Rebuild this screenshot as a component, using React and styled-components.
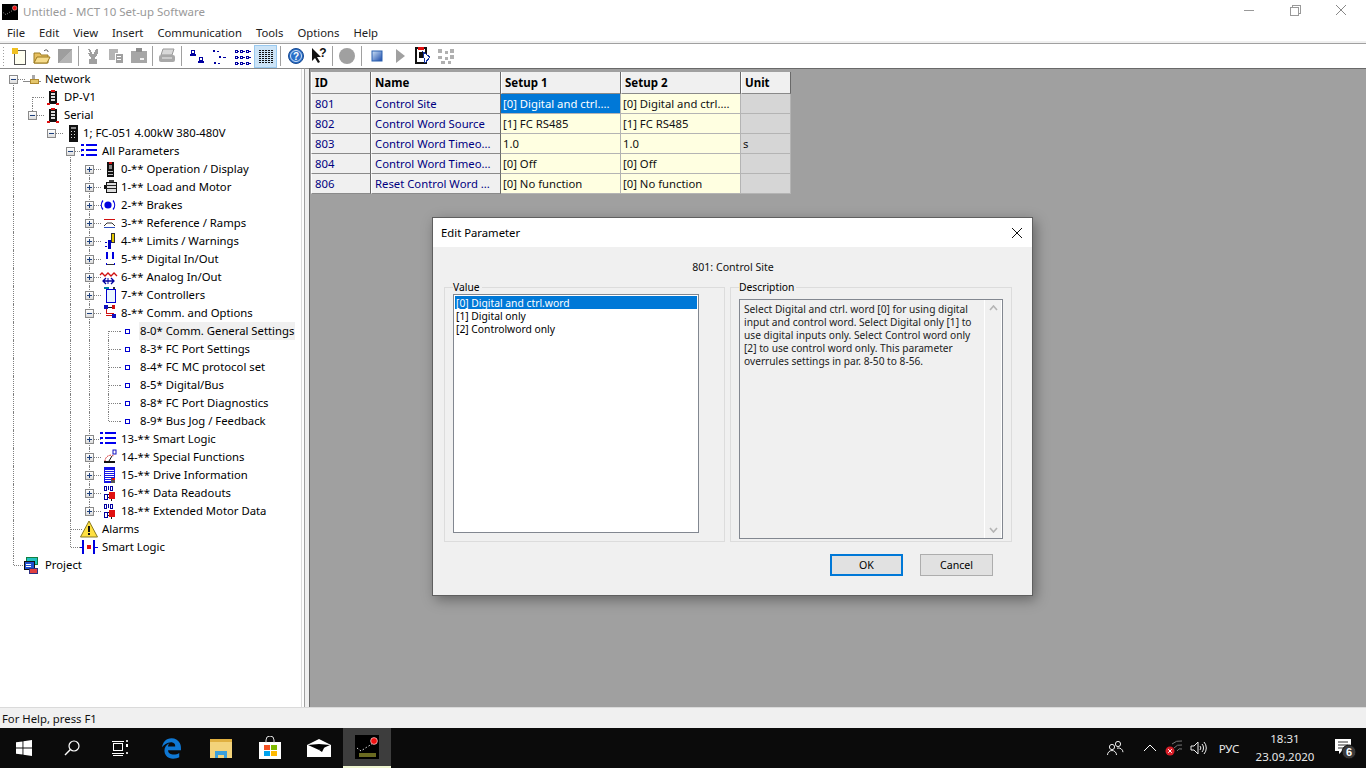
import React from 'react';
import styled, { createGlobalStyle } from 'styled-components';
import { FaEdgeLegacy } from 'react-icons/fa';

const GlobalStyle = createGlobalStyle`
  html, body { margin: 0; padding: 0; background: #fff; }
  * { box-sizing: border-box; }
  body { font-family: "Noto Sans", "Liberation Sans", sans-serif; font-size: 11.3px; color: #000; }
`;

const Screen = styled.div`
  position: relative;
  width: 1366px;
  height: 768px;
  overflow: hidden;
  display: flex;
  flex-direction: column;
`;

/* title bar + menu */
const TitleBar = styled.div`
  height: 24px;
  display: flex;
  align-items: center;
  padding-left: 2px;
  color: #999;
`;
const TitleText = styled.span`
  margin-left: 5px;
  margin-top: -2px;
  font-size: 11.5px;
`;
const WinControls = styled.div`
  margin-left: auto;
  display: flex;
  height: 20px;
  margin-top: -4px;
  margin-right: 2px;
`;
const WinControl = styled.div`
  width: 46px;
  display: flex;
  align-items: center;
  justify-content: center;
`;
const MenuBar = styled.div`
  height: 17px;
  display: flex;
  gap: 14px;
  padding-left: 7px;
  align-items: center;
  color: #222;
`;

/* toolbar */
const Toolbar = styled.div`
  height: 27px;
  border-top: 2px solid #f0f0f0;
  display: flex;
  align-items: center;
  padding-left: 7px;
  position: relative;
  box-shadow: inset 0 1px 0 #a0a0a0;
`;
const Grip = styled.div`
  position: absolute;
  left: 3px;
  top: 4px;
  bottom: 2px;
  width: 1px;
  background: repeating-linear-gradient(#a0a0a0 0 1px, transparent 1px 3px);
`;
const ToolButton = styled.div`
  width: 23px;
  height: 23px;
  margin-top: 1px;
  display: flex;
  align-items: center;
  justify-content: center;
  background: ${p => (p.$active ? '#cce4f7' : 'transparent')};
  border: 1px solid ${p => (p.$active ? '#99c9ef' : 'transparent')};
`;
const ToolSep = styled.div`
  width: ${p => p.$w}px;
  height: 20px;
  display: flex;
  justify-content: center;
  &::before { content: ''; width: 1px; background: #a0a0a0; }
`;

/* main area */
const Workspace = styled.div`
  height: 639px;
  display: flex;
`;
const TreePanel = styled.div`
  width: 305px;
  padding-top: 1px;
  background: #fff;
  border-top: 1px solid #8a8a8a;
  border-right: 1px solid #a0a0a0;
  box-shadow: inset -2px 0 0 #fff, inset -3px 0 0 #dcdcdc;
`;
const Splitter = styled.div`
  width: 4px;
  background: #f0f0f0;
  border-top: 1px solid #8a8a8a;
`;
const Mdi = styled.div`
  flex: 1;
  background: #a0a0a0;
  border-top: 1px solid #696969;
  border-left: 1px solid #696969;
  padding: 3px 0 0 1px;
`;

/* tree */
const TreeRow = styled.div`
  height: 18px;
  display: flex;
  padding-left: 4px;
  align-items: stretch;
`;
const Guide = styled.span`
  width: 19px;
  flex: none;
  position: relative;
  &::before {
    content: '';
    display: ${p => (p.$on ? 'block' : 'none')};
    position: absolute;
    left: 9px;
    top: 0;
    bottom: 0;
    border-left: 1px dotted #808080;
  }
`;
const Branch = styled.span`
  width: 19px;
  flex: none;
  position: relative;
  display: flex;
  align-items: center;
  justify-content: center;
  &::before {
    content: '';
    position: absolute;
    left: 9px;
    top: ${p => (p.$first ? '9px' : '0')};
    bottom: ${p => (p.$last ? '9px' : '0')};
    border-left: 1px dotted #808080;
  }
  &::after {
    content: '';
    position: absolute;
    left: 10px;
    right: -2px;
    top: 9px;
    border-top: 1px dotted #808080;
  }
`;
const Expander = styled.span`
  position: relative;
  z-index: 1;
  width: 9px;
  height: 9px;
  background: linear-gradient(#fff, #dcdcdc);
  border: 1px solid #8a8a8a;
  display: block;
  &::before {
    content: '';
    position: absolute;
    left: 1px;
    top: 3px;
    width: 5px;
    height: 1px;
    background: #1c3f7c;
  }
  &::after {
    content: '';
    display: ${p => (p.$open ? 'none' : 'block')};
    position: absolute;
    left: 3px;
    top: 1px;
    width: 1px;
    height: 5px;
    background: #1c3f7c;
  }
`;
const TreeIcon = styled.span`
  width: 21px;
  flex: none;
  display: flex;
  align-items: center;
  position: relative;
  z-index: 1;
`;
const TreeLabel = styled.span`
  height: 18px;
  line-height: 17px;
  padding: 0 1px;
  white-space: nowrap;
  background: ${p => (p.$selected ? '#f0f0f0' : 'transparent')};
  width: ${p => (p.$selected ? '156px' : 'auto')};
`;

/* parameter grid */
const ParamGrid = styled.div`
  display: grid;
  grid-template-columns: 60px 130px 120px 120px 50px;
  grid-template-rows: 22px repeat(5, 20px);
  width: 480px;
`;
const HeadCell = styled.div`
  background: #f0f0f0;
  font-weight: 700;
  padding-left: 3px;
  line-height: 21px;
  font-size: 11.5px;
  border-right: 1px solid #696969;
  border-bottom: 1px solid #8a8a8a;
  border-left: 1px solid #fff;
`;
const NameCell = styled.div`
  background: #f0f0f0;
  color: #000080;
  padding-left: 3px;
  line-height: 19px;
  white-space: nowrap;
  overflow: hidden;
  border-right: 1px solid #696969;
  border-bottom: 1px solid #8a8a8a;
  border-left: 1px solid #fff;
`;
const ValueCell = styled.div`
  background: ${p => (p.$selected ? '#0078d7' : p.$unit ? '#d6d6d6' : '#ffffe1')};
  color: ${p => (p.$selected ? '#fff' : '#111')};
  padding-left: 2px;
  line-height: 19px;
  white-space: nowrap;
  overflow: hidden;
  border-right: 1px solid #b4b4b4;
  border-bottom: 1px solid #b4b4b4;
`;

/* dialog */
const Dialog = styled.div`
  position: absolute;
  left: 432px;
  top: 217px;
  width: 601px;
  height: 379px;
  background: #f0f0f0;
  border: 1px solid #5f5f5f;
  box-shadow: 3px 4px 12px rgba(0, 0, 0, 0.35);
  display: flex;
  flex-direction: column;
`;
const DialogTitle = styled.div`
  height: 29px;
  background: #fff;
  display: flex;
  align-items: center;
  justify-content: space-between;
  padding: 0 9px 0 8px;
`;
const DialogBody = styled.div`
  flex: 1;
  padding: 13px 20px 0 11px;
  display: flex;
  flex-direction: column;
`;
const ParamCaption = styled.div`
  height: 14px;
  line-height: 14px;
  font-size: 10.6px;
  text-align: center;
  color: #111;
  margin-bottom: 7px;
  padding-left: 10px;
`;
const Groups = styled.div`
  display: grid;
  grid-template-columns: 281px 282px;
  gap: 5px;
`;
const Group = styled.fieldset`
  margin: 0;
  height: 261px;
  min-width: 0;
  padding: 0 8px;
  border: 1px solid #dcdcdc;
`;
const GroupLegend = styled.legend`
  padding: 0 2px 0 0;
  font-size: 10.3px;
  line-height: 12px;
  margin-bottom: 1px;
  background: #f0f0f0;
`;
const ListBox = styled.div`
  width: 246px;
  height: 239px;
  background: #fff;
  border: 1px solid #828790;
  padding: 1px;
  font-size: 10.3px;
`;
const ListItem = styled.div`
  height: 13px;
  line-height: 14px;
  padding-left: 1px;
  white-space: nowrap;
  background: ${p => (p.$selected ? '#0078d7' : 'transparent')};
  color: ${p => (p.$selected ? '#fff' : '#000')};
`;
const DescBox = styled.div`
  margin-top: 5px;
  width: 264px;
  height: 240px;
  border: 1px solid #828790;
  display: flex;
  font-size: 10.2px;
`;
const DescText = styled.div`
  flex: 1;
  padding: 3px 0 0 4px;
  line-height: 13px;
  color: #222;
`;
const DescLine = styled.div`
  white-space: nowrap;
`;
const ScrollTrack = styled.div`
  width: 18px;
  background: #f0f0f0;
  border-left: 1px solid #fff;
  border-right: 1px solid #fff;
  display: flex;
  flex-direction: column;
  justify-content: space-between;
  align-items: center;
  padding: 5px 0;
`;
const ButtonRow = styled.div`
  display: flex;
  justify-content: flex-end;
  gap: 17px;
  margin-top: 12px;
  padding-right: 19px;
`;
const DialogButton = styled.div`
  width: 73px;
  height: 22px;
  background: #e1e1e1;
  border: ${p => (p.$primary ? '2px solid #0078d7' : '1px solid #adadad')};
  display: flex;
  align-items: center;
  justify-content: center;
  font-size: 10.6px;
`;

/* status + taskbar */
const StatusBar = styled.div`
  height: 21px;
  background: #f0f0f0;
  border-top: 1px solid #dadada;
  display: flex;
  align-items: center;
  padding-left: 2px;
  color: #111;
`;
const Taskbar = styled.div`
  height: 40px;
  background: #0b0b0b;
  display: flex;
  color: #e8e8e8;
`;
const TaskSlot = styled.div`
  width: ${p => p.$w || 48}px;
  margin-left: ${p => p.$ml || 0}px;
  flex: none;
  display: flex;
  align-items: center;
  justify-content: center;
  position: relative;
  background: ${p => (p.$active ? '#3d3d3d' : 'transparent')};
  border-bottom: ${p => (p.$active ? '2px solid #eef5d0' : 'none')};
`;
const PinnedApps = styled.div`
  display: flex;
  margin-left: 3px;
`;
const Tray = styled.div`
  margin-left: auto;
  display: flex;
`;
const Lang = styled.div`
  width: 34px;
  display: flex;
  align-items: center;
  justify-content: center;
  font-size: 11.5px;
`;
const Clock = styled.div`
  width: 78px;
  display: flex;
  flex-direction: column;
  align-items: center;
  justify-content: center;
  gap: 3px;
  padding-bottom: 1px;
  line-height: 15px;
  font-size: 11.5px;
`;

/* ---- drawings ---- */
const Svg = styled.svg`
  display: block;
  flex: none;
`;
const Glyph = ({ w = 20, h = 18, children, crisp }) => (
  <Svg width={w} height={h} viewBox={`0 0 ${w} ${h}`} shapeRendering={crisp ? 'crispEdges' : undefined}>{children}</Svg>
);

const treeIcons = {
  network: (
    <Glyph crisp>
      <path d="M0 11h18" stroke="#8a8a8a" />
      <rect x="9" y="5" width="3" height="5" fill="#a8a8a8" />
      <rect x="7" y="9" width="8" height="4" fill="#e3c56b" stroke="#b08a30" />
    </Glyph>
  ),
  dp: (
    <Glyph crisp>
      <rect x="7" y="3" width="8" height="12" fill="#111" />
      <rect x="9" y="5" width="4" height="2" fill="#ddd" />
      <rect x="9" y="8" width="4" height="2" fill="#ddd" />
      <rect x="9" y="11" width="4" height="2" fill="#ddd" />
      <rect x="9" y="2" width="4" height="2" fill="#e01010" />
      <rect x="5" y="15" width="12" height="1" fill="#111" />
      <rect x="5" y="15" width="3" height="2" fill="#e01010" />
      <rect x="14" y="15" width="3" height="2" fill="#e01010" />
    </Glyph>
  ),
  fc: (
    <Glyph crisp>
      <rect x="8" y="1" width="9" height="17" fill="#111" />
      <rect x="10" y="3" width="5" height="2" fill="#8a8a8a" />
      <path d="M10 7h1M13 7h1M10 10h1M13 10h1M10 13h1M13 13h1" stroke="#ddd" />
    </Glyph>
  ),
  list: (
    <Glyph crisp>
      <path d="M1 3h3M6 3h11M1 8h3M6 8h11M1 13h3M6 13h11" stroke="#0000f0" strokeWidth="2" />
    </Glyph>
  ),
  op: (
    <Glyph crisp>
      <rect x="8" y="2" width="7" height="15" fill="#111" />
      <rect x="10" y="2" width="3" height="2" fill="#d01010" />
      <rect x="10" y="5" width="3" height="4" fill="#8a8a8a" />
      <path d="M9 11h5M9 14h5" stroke="#bbb" />
    </Glyph>
  ),
  motor: (
    <Glyph crisp>
      <rect x="7" y="4" width="10" height="10" fill="#dcdcdc" stroke="#111" />
      <path d="M7 7h10M7 10h10" stroke="#222" />
      <rect x="5" y="7" width="2" height="4" fill="#111" />
      <rect x="10" y="2" width="5" height="2" fill="#444" />
    </Glyph>
  ),
  brake: (
    <Glyph>
      <circle cx="9" cy="9" r="3.6" fill="#0000e0" />
      <path d="M4 4.5a7 7 0 0 0 0 9M14 4.5a7 7 0 0 1 0 9" fill="none" stroke="#0000e0" strokeWidth="1.2" />
    </Glyph>
  ),
  ramp: (
    <Glyph crisp>
      <path d="M5 5h11" stroke="#d01010" />
      <path d="M5 12l3-3h5l3 3" fill="none" stroke="#333" shapeRendering="auto" />
      <path d="M5 13h11" stroke="#3050c0" />
    </Glyph>
  ),
  limit: (
    <Glyph crisp>
      <rect x="12" y="1" width="3" height="9" fill="#e5c800" stroke="#333" />
      <rect x="9" y="8" width="3" height="9" fill="#0000c0" />
      <path d="M6 10h7M6 14h4" stroke="#0000c0" strokeDasharray="2 1" />
    </Glyph>
  ),
  digital: (
    <Glyph crisp>
      <rect x="7" y="2" width="2" height="7" fill="#0000e0" />
      <rect x="13" y="2" width="2" height="7" fill="#0000e0" />
      <path d="M7 14h8" stroke="#333" />
      <path d="M7 13v2M15 13v2" stroke="#0000e0" />
    </Glyph>
  ),
  analog: (
    <Glyph>
      <path d="M1 7l2-2 3 3 3-3 3 3 3-3 3 3" fill="none" stroke="#d01010" strokeWidth="1.3" />
      <path d="M4 13h11M7 10l-3 3 3 3M12 10l3 3-3 3" fill="none" stroke="#0000a0" strokeWidth="1.3" />
      <path d="M9 10v6" stroke="#0000a0" />
    </Glyph>
  ),
  ctrl: (
    <Glyph crisp>
      <rect x="7" y="3" width="9" height="13" fill="#eaf6ff" stroke="#0000d0" />
      <path d="M5 2h5" stroke="#0080a0" strokeWidth="2" />
      <path d="M14 2h2" stroke="#333" strokeWidth="2" />
    </Glyph>
  ),
  comm: (
    <Glyph crisp>
      <rect x="5" y="1" width="4" height="4" fill="#1010c0" />
      <rect x="13" y="1" width="3" height="4" fill="#d01010" />
      <path d="M9 3h4" stroke="#111" />
      <path d="M7 5v4h8" stroke="#d01010" fill="none" />
      <path d="M7 11h7" stroke="#d01010" />
      <rect x="13" y="10" width="4" height="4" fill="#1010c0" />
    </Glyph>
  ),
  special: (
    <Glyph>
      <path d="M6 13a6 6 0 0 1 9-5" fill="none" stroke="#d01010" strokeDasharray="1.5 1" />
      <path d="M10 13l3-5" stroke="#111" />
      <rect x="5" y="13" width="11" height="2" fill="#111" />
      <rect x="14" y="2" width="3" height="4" fill="#fff" stroke="#1010c0" />
    </Glyph>
  ),
  info: (
    <Glyph crisp>
      <rect x="5" y="1" width="11" height="16" fill="#1515e8" />
      <path d="M6 4h9M6 6h9M6 8h9M6 10h9M6 12h6M6 14h6" stroke="#fff" />
      <rect x="12" y="12" width="4" height="5" fill="#555" />
      <rect x="13" y="12" width="3" height="2" fill="#e01010" />
    </Glyph>
  ),
  data: (
    <Glyph crisp>
      <path d="M5 2h2v4H5zM11 2h2v4h-2zM5 10h3v5H5z" fill="none" stroke="#0000a0" />
      <path d="M9 2v4" stroke="#0000a0" />
      <rect x="10" y="8" width="6" height="7" fill="#e01010" />
      <path d="M9 10h1M9 13h1M12 15v2" stroke="#111" />
    </Glyph>
  ),
  alarm: (
    <Glyph>
      <path d="M9 1L17.5 17H.5z" fill="#ffe040" stroke="#8a7a20" strokeLinejoin="round" />
      <rect x="8" y="6" width="2" height="6" fill="#111" />
      <rect x="8" y="13" width="2" height="2" fill="#111" />
    </Glyph>
  ),
  logic: (
    <Glyph crisp>
      <path d="M3 2v14M14 2v14" stroke="#0000e0" strokeWidth="2" />
      <path d="M0 9h3M14 9h4" stroke="#0000e0" />
      <rect x="7" y="7" width="4" height="4" fill="#e01010" />
    </Glyph>
  ),
  project: (
    <Glyph crisp>
      <rect x="3" y="1" width="11" height="7" fill="#20c0c0" stroke="#108040" />
      <rect x="1" y="5" width="10" height="8" fill="#2050d0" stroke="#111" />
      <path d="M3 8h5M3 10h5" stroke="#fff" />
      <rect x="6" y="12" width="8" height="5" fill="#e04040" stroke="#303080" />
    </Glyph>
  ),
  leaf: (
    <Glyph crisp>
      <path d="M2 9h2" stroke="#808080" strokeDasharray="1 1" />
      <rect x="7" y="7" width="4" height="4" fill="#fff" stroke="#0000d0" />
    </Glyph>
  ),
};

const tool = {
  newDoc: (
    <Glyph w={18} h={18} crisp>
      <rect x="4" y="3" width="11" height="14" fill="#fffff0" stroke="#555" />
      <circle cx="5" cy="4" r="3.5" fill="#f0c020" />
    </Glyph>
  ),
  open: (
    <Glyph w={18} h={18}>
      <path d="M1 6h6l1 2h7v8H1z" fill="#e8c060" stroke="#9a7a20" />
      <path d="M1 16l3-6h13l-3 6z" fill="#f6dc8c" stroke="#9a7a20" />
      <path d="M11 4c2-2 4-1 4 1" fill="none" stroke="#444" />
    </Glyph>
  ),
  save: (
    <Glyph w={18} h={18} crisp>
      <rect x="2" y="2" width="14" height="14" fill="#9e9e9e" />
      <path d="M2 16L16 2v14z" fill="#b4b4b4" />
    </Glyph>
  ),
  cut: (
    <Glyph w={18} h={18} crisp>
      <path d="M5 2l4 8 4-8v4l-3 5v5h2v-3h-1M5 6l3 5v5H6v-3h1" fill="none" stroke="#a0a0a0" strokeWidth="2" />
    </Glyph>
  ),
  copy: (
    <Glyph w={18} h={18} crisp>
      <rect x="2" y="2" width="9" height="11" fill="#b4b4b4" />
      <rect x="8" y="6" width="8" height="10" fill="#a0a0a0" stroke="#fff" />
      <path d="M10 9h4M10 12h4" stroke="#fff" />
    </Glyph>
  ),
  paste: (
    <Glyph w={18} h={18} crisp>
      <rect x="1" y="4" width="16" height="12" fill="#a6a6a6" />
      <rect x="6" y="1" width="6" height="4" fill="#8e8e8e" />
      <rect x="10" y="11" width="4" height="2" fill="#f0f0f0" />
    </Glyph>
  ),
  print: (
    <Glyph w={18} h={18}>
      <path d="M5 2h11l-2 6H3z" fill="#d8d8d8" stroke="#999" />
      <rect x="1" y="8" width="16" height="7" rx="2" fill="#a8a8a8" />
      <path d="M4 11h10" stroke="#eee" />
    </Glyph>
  ),
  nodes1: (
    <Glyph w={18} h={18} crisp>
      <rect x="3" y="3" width="3" height="3" fill="#fff" stroke="#0000a0" />
      <path d="M2 8h6M10 15h6" stroke="#0000a0" strokeWidth="1.5" />
      <rect x="11" y="10" width="3" height="3" fill="#fff" stroke="#0000a0" />
    </Glyph>
  ),
  nodes2: (
    <Glyph w={18} h={18} crisp>
      <path d="M2 3h2M2 4h2M6 4h2M8 9h2M8 10h2M12 10h3M3 15h2M3 16h2M7 16h2" stroke="#0000a0" />
    </Glyph>
  ),
  nodes3: (
    <Glyph w={18} h={18} crisp>
      <path d="M1 3h2v2H1zM6 3h2v2H6zM12 3h2v2h-2zM1 9h2v2H1zM6 9h2v2H6zM12 9h2v2h-2zM1 15h2v2H1zM6 15h2v2H6zM12 15h2v2h-2z" fill="none" stroke="#0000a0" />
      <path d="M4 4h1M9 4h2M15 4h2M4 10h1M9 10h2M15 10h2M4 16h1M9 16h2M15 16h2" stroke="#0000a0" />
    </Glyph>
  ),
  table: (
    <Glyph w={18} h={18} crisp>
      <path d="M2 3h14M2 5h14M2 7h14M2 9h14M2 11h14M2 13h14M2 15h14" stroke="#111" strokeDasharray="2 1" />
    </Glyph>
  ),
  help: (
    <Glyph w={18} h={18}>
      <circle cx="9" cy="9" r="7.5" fill="#2a6fc8" stroke="#1a4a90" />
      <circle cx="9" cy="9" r="5.5" fill="none" stroke="#cfe0f5" />
      <text x="9" y="12.5" textAnchor="middle" fontSize="10" fontWeight="700" fill="#fff" fontFamily="Liberation Sans, sans-serif">?</text>
    </Glyph>
  ),
  whatsThis: (
    <Glyph w={18} h={18}>
      <path d="M2 1v13l3-3 3 5 2-1-3-5h4z" fill="#111" />
      <text x="13" y="10" textAnchor="middle" fontSize="12" fontWeight="700" fill="#111" fontFamily="Liberation Sans, sans-serif">?</text>
    </Glyph>
  ),
  record: (
    <Glyph w={18} h={18}>
      <circle cx="9" cy="9" r="8" fill="#a0a0a0" />
    </Glyph>
  ),
  stop: (
    <Glyph w={18} h={18}>
      <defs>
        <linearGradient id="stopGrad" x1="0" y1="0" x2="1" y2="1">
          <stop offset="0" stopColor="#d0e4f8" />
          <stop offset="1" stopColor="#1848a8" />
        </linearGradient>
      </defs>
      <rect x="4" y="4" width="10" height="10" fill="url(#stopGrad)" stroke="#2a60b0" />
    </Glyph>
  ),
  play: (
    <Glyph w={18} h={18}>
      <path d="M5 2l9 7-9 7z" fill="#a0a0a0" />
    </Glyph>
  ),
  drive: (
    <Glyph w={18} h={18} crisp>
      <rect x="2" y="1" width="10" height="15" fill="#fff" stroke="#111" strokeWidth="2" />
      <rect x="4" y="0" width="6" height="3" fill="#e01010" />
      <path d="M9 5l7 5-5 6z" fill="#fff" stroke="#1030a0" />
      <rect x="5" y="5" width="4" height="6" fill="#111" />
    </Glyph>
  ),
  grid: (
    <Glyph w={18} h={18} crisp>
      <path d="M1 2h4v4H1zM8 4h3v3H8zM13 2h4v4h-4zM1 9h4v3H1zM8 10h3v3H8zM13 8h4v4h-4zM4 14h4v3H4zM11 14h3v3h-3z" fill="#b0b0b0" />
    </Glyph>
  ),
};

const MctLogo = ({ size = 16 }) => (
  <Svg width={size} height={size} viewBox="0 0 24 24">
    <rect width="24" height="24" fill="#000" />
    <path d="M2 13l4 3 6-4 5-3" fill="none" stroke="#ddd" strokeDasharray="1.5 2" />
    <circle cx="19" cy="6" r="3.4" fill="#f01010" stroke="#fff" strokeWidth=".6" />
    {size > 16 && <rect x="4" y="18" width="17" height="4" fill="#6a6a20" />}
  </Svg>
);

const treeRows = [
  { guides: [], first: true, open: true, icon: 'network', text: 'Network' },
  { guides: [1], first: true, icon: 'dp', text: 'DP-V1' },
  { guides: [1], last: true, open: true, icon: 'dp', text: 'Serial' },
  { guides: [1, 0], first: true, last: true, open: true, icon: 'fc', text: '1; FC-051 4.00kW 380-480V' },
  { guides: [1, 0, 0], first: true, open: true, icon: 'list', text: 'All Parameters' },
  { guides: [1, 0, 0, 1], first: true, plus: true, icon: 'op', text: '0-** Operation / Display' },
  { guides: [1, 0, 0, 1], plus: true, icon: 'motor', text: '1-** Load and Motor' },
  { guides: [1, 0, 0, 1], plus: true, icon: 'brake', text: '2-** Brakes' },
  { guides: [1, 0, 0, 1], plus: true, icon: 'ramp', text: '3-** Reference / Ramps' },
  { guides: [1, 0, 0, 1], plus: true, icon: 'limit', text: '4-** Limits / Warnings' },
  { guides: [1, 0, 0, 1], plus: true, icon: 'digital', text: '5-** Digital In/Out' },
  { guides: [1, 0, 0, 1], plus: true, icon: 'analog', text: '6-** Analog In/Out' },
  { guides: [1, 0, 0, 1], plus: true, icon: 'ctrl', text: '7-** Controllers' },
  { guides: [1, 0, 0, 1], open: true, icon: 'comm', text: '8-** Comm. and Options' },
  { guides: [1, 0, 0, 1, 1], first: true, icon: 'leaf', text: '8-0* Comm. General Settings', selected: true },
  { guides: [1, 0, 0, 1, 1], icon: 'leaf', text: '8-3* FC Port Settings' },
  { guides: [1, 0, 0, 1, 1], icon: 'leaf', text: '8-4* FC MC protocol set' },
  { guides: [1, 0, 0, 1, 1], icon: 'leaf', text: '8-5* Digital/Bus' },
  { guides: [1, 0, 0, 1, 1], icon: 'leaf', text: '8-8* FC Port Diagnostics' },
  { guides: [1, 0, 0, 1, 1], last: true, icon: 'leaf', text: '8-9* Bus Jog / Feedback' },
  { guides: [1, 0, 0, 1], plus: true, icon: 'list', text: '13-** Smart Logic' },
  { guides: [1, 0, 0, 1], plus: true, icon: 'special', text: '14-** Special Functions' },
  { guides: [1, 0, 0, 1], plus: true, icon: 'info', text: '15-** Drive Information' },
  { guides: [1, 0, 0, 1], plus: true, icon: 'data', text: '16-** Data Readouts' },
  { guides: [1, 0, 0, 1], plus: true, last: true, icon: 'data', text: '18-** Extended Motor Data' },
  { guides: [1, 0, 0], icon: 'alarm', text: 'Alarms' },
  { guides: [1, 0, 0], last: true, icon: 'logic', text: 'Smart Logic' },
  { guides: [], last: true, icon: 'project', text: 'Project' },
];

const params = [
  ['801', 'Control Site', '[0] Digital and ctrl....', '[0] Digital and ctrl....', ''],
  ['802', 'Control Word Source', '[1] FC RS485', '[1] FC RS485', ''],
  ['803', 'Control Word Timeo...', '1.0', '1.0', 's'],
  ['804', 'Control Word Timeo...', '[0] Off', '[0] Off', ''],
  ['806', 'Reset Control Word ...', '[0] No function', '[0] No function', ''],
];

const description = [
  'Select Digital and ctrl. word [0] for using digital',
  'input and control word. Select Digital only [1] to',
  'use digital inputs only. Select Control word only',
  '[2] to use control word only. This parameter',
  'overrules settings in par. 8-50 to 8-56.',
];

const toolbar = [
  'newDoc', 'open', 'save', 5, 'cut', 'copy', 'paste', 5, 'print', 7,
  'nodes1', 'nodes2', 'nodes3', 'table', 7, 'help', 'whatsThis', 5, 'record', 7,
  'stop', 'play', 'drive', 'grid',
];

const menus = ['File', 'Edit', 'View', 'Insert', 'Communication', 'Tools', 'Options', 'Help'];

export default function App() {
  return (
    <Screen>
      <GlobalStyle />
      <TitleBar>
        <MctLogo />
        <TitleText>Untitled - MCT 10 Set-up Software</TitleText>
        <WinControls>
          <WinControl>
            <Glyph w={12} h={12} crisp><path d="M1 6h10" stroke="#999" /></Glyph>
          </WinControl>
          <WinControl>
            <Glyph w={12} h={12} crisp><path d="M3 3V1h8v8H9M1 3h8v8H1z" fill="none" stroke="#999" /></Glyph>
          </WinControl>
          <WinControl>
            <Glyph w={12} h={12}><path d="M1 1l10 10M11 1L1 11" stroke="#888" /></Glyph>
          </WinControl>
        </WinControls>
      </TitleBar>
      <MenuBar>
        {menus.map(m => <span key={m}>{m}</span>)}
      </MenuBar>
      <Toolbar>
        <Grip />
        {toolbar.map((t, i) =>
          typeof t === 'number'
            ? <ToolSep key={i} $w={t} />
            : <ToolButton key={i} $active={t === 'table'}>{tool[t]}</ToolButton>
        )}
      </Toolbar>
      <Workspace>
        <TreePanel>
          {treeRows.map(row => (
            <TreeRow key={row.text + row.icon}>
              {row.guides.map((on, i) => <Guide key={i} $on={on === 1} />)}
              <Branch $first={row.first} $last={row.last}>
                {row.open && <Expander $open />}
                {row.plus && <Expander />}
              </Branch>
              <TreeIcon>{treeIcons[row.icon]}</TreeIcon>
              <TreeLabel $selected={row.selected}>{row.text}</TreeLabel>
            </TreeRow>
          ))}
        </TreePanel>
        <Splitter />
        <Mdi>
          <ParamGrid>
            {['ID', 'Name', 'Setup 1', 'Setup 2', 'Unit'].map(h => <HeadCell key={h}>{h}</HeadCell>)}
            {params.map((row, r) => (
              <React.Fragment key={row[0]}>
                <NameCell>{row[0]}</NameCell>
                <NameCell>{row[1]}</NameCell>
                <ValueCell $selected={r === 0}>{row[2]}</ValueCell>
                <ValueCell>{row[3]}</ValueCell>
                <ValueCell $unit>{row[4]}</ValueCell>
              </React.Fragment>
            ))}
          </ParamGrid>
        </Mdi>
      </Workspace>
      <StatusBar>For Help, press F1</StatusBar>
      <Taskbar>
        <TaskSlot>
          <Glyph w={16} h={16}>
            <path d="M0 2.3L6.5 1.4v6.2H0zM7.4 1.3L16 0v7.6H7.4zM0 8.4h6.5v6.2L0 13.7zM7.4 8.4H16V16l-8.6-1.2z" fill="#fff" />
          </Glyph>
        </TaskSlot>
        <TaskSlot>
          <Glyph w={16} h={16}>
            <circle cx="10" cy="6" r="5" fill="none" stroke="#fff" strokeWidth="1.2" />
            <path d="M6.4 9.6L1 15" stroke="#fff" strokeWidth="1.4" />
          </Glyph>
        </TaskSlot>
        <TaskSlot>
          <Glyph w={16} h={16} crisp>
            <path d="M1.5 3.5h9v7h-9zM0 1h12M0 13h12M1 15h10" fill="none" stroke="#fff" />
            <rect x="14" y="4" width="2" height="3" fill="#fff" />
            <rect x="14" y="0" width="2" height="2" fill="#ccc" />
            <rect x="14" y="12" width="2" height="2" fill="#ccc" />
          </Glyph>
        </TaskSlot>
        <PinnedApps>
          <TaskSlot $w={49}><FaEdgeLegacy size={21} color="#0f78d4" /></TaskSlot>
          <TaskSlot $w={49}>
            <Glyph w={22} h={20}>
              <path d="M0 1h8l2 2h12v17H0z" fill="#f3d37a" />
              <rect x="0" y="1" width="22" height="3" fill="#e0b040" />
              <path d="M5 20v-7h12v7h-3v-3H8v3z" fill="#3aa0dc" />
            </Glyph>
          </TaskSlot>
          <TaskSlot $w={49}>
            <Glyph w={24} h={24} crisp>
              <rect x="1" y="6" width="22" height="17" rx="1" fill="#fff" />
              <path d="M8 7V4a4 4 0 0 1 8 0v3" fill="none" stroke="#ddd" shapeRendering="auto" />
              <rect x="6" y="9" width="6" height="5" fill="#f25022" />
              <rect x="13" y="9" width="6" height="5" fill="#7fba00" />
              <rect x="6" y="15" width="6" height="5" fill="#00a4ef" />
              <rect x="13" y="15" width="6" height="5" fill="#ffb900" />
            </Glyph>
          </TaskSlot>
          <TaskSlot $w={49}>
            <Glyph w={24} h={18}>
              <path d="M0 6L12 0l12 6v12H0z" fill="#fff" />
              <path d="M1 6l11-1 11 1-11 5z" fill="#000" />
              <path d="M12 11l6-4-3 6z" fill="#000" />
            </Glyph>
          </TaskSlot>
          <TaskSlot $w={48} $active><MctLogo size={24} /></TaskSlot>
        </PinnedApps>
        <Tray>
          <TaskSlot $w={30}>
            <Glyph w={18} h={16}>
              <circle cx="6" cy="7" r="2.6" fill="none" stroke="#eee" />
              <path d="M1.5 15a4.5 4.5 0 0 1 9 0" fill="none" stroke="#eee" />
              <circle cx="12" cy="4" r="2.6" fill="none" stroke="#eee" />
              <path d="M11 8.2a4.5 4.5 0 0 1 6 4" fill="none" stroke="#eee" />
            </Glyph>
          </TaskSlot>
          <TaskSlot $w={24} $ml={8}>
            <Glyph w={12} h={8}><path d="M0 7l6-6 6 6" fill="none" stroke="#fff" /></Glyph>
          </TaskSlot>
          <TaskSlot $w={24}>
            <Glyph w={18} h={16}>
              <path d="M7 4a12 12 0 0 1 10-3M9 8a8 8 0 0 1 8-3M12 11a4 4 0 0 1 5-2" fill="none" stroke="#777" />
              <circle cx="5" cy="11" r="4.5" fill="#d81e28" />
              <path d="M3.2 9.2l3.6 3.6M6.8 9.2l-3.6 3.6" stroke="#fff" />
            </Glyph>
          </TaskSlot>
          <TaskSlot $w={26}>
            <Glyph w={18} h={16}>
              <path d="M1 6h3l4-4v12l-4-4H1z" fill="none" stroke="#eee" />
              <path d="M10 6a3 3 0 0 1 0 4M12 4a6 6 0 0 1 0 8M14 2a9 9 0 0 1 0 12" fill="none" stroke="#eee" />
            </Glyph>
          </TaskSlot>
          <Lang>РУС</Lang>
          <Clock>
            <span>18:31</span>
            <span>23.09.2020</span>
          </Clock>
          <TaskSlot $w={42}>
            <Glyph w={26} h={24}>
              <path d="M3 3h16v12h-9l-3 3v-3H3z" fill="#fff" />
              <path d="M6 6h10M6 9h10M6 12h6" stroke="#333" />
              <circle cx="17" cy="16" r="7" fill="#3a3a3a" stroke="#0b0b0b" />
              <text x="17" y="20" textAnchor="middle" fontSize="11" fontWeight="700" fill="#fff" fontFamily="Liberation Sans, sans-serif">6</text>
            </Glyph>
          </TaskSlot>
        </Tray>
      </Taskbar>
      <Dialog>
        <DialogTitle>
          <span>Edit Parameter</span>
          <Glyph w={12} h={12}><path d="M1 1l10 10M11 1L1 11" stroke="#111" /></Glyph>
        </DialogTitle>
        <DialogBody>
          <ParamCaption>801: Control Site</ParamCaption>
          <Groups>
            <Group>
              <GroupLegend>Value</GroupLegend>
              <ListBox>
                <ListItem $selected>[0] Digital and ctrl.word</ListItem>
                <ListItem>[1] Digital only</ListItem>
                <ListItem>[2] Controlword only</ListItem>
              </ListBox>
            </Group>
            <Group>
              <GroupLegend>Description</GroupLegend>
              <DescBox>
                <DescText>
                  {description.map(line => <DescLine key={line}>{line}</DescLine>)}
                </DescText>
                <ScrollTrack>
                  <Glyph w={9} h={6}><path d="M1 5l3.5-4L8 5" fill="none" stroke="#b4b4b4" strokeWidth="1.6" /></Glyph>
                  <Glyph w={9} h={6}><path d="M1 1l3.5 4L8 1" fill="none" stroke="#b4b4b4" strokeWidth="1.6" /></Glyph>
                </ScrollTrack>
              </DescBox>
            </Group>
          </Groups>
          <ButtonRow>
            <DialogButton $primary>OK</DialogButton>
            <DialogButton>Cancel</DialogButton>
          </ButtonRow>
        </DialogBody>
      </Dialog>
    </Screen>
  );
}
